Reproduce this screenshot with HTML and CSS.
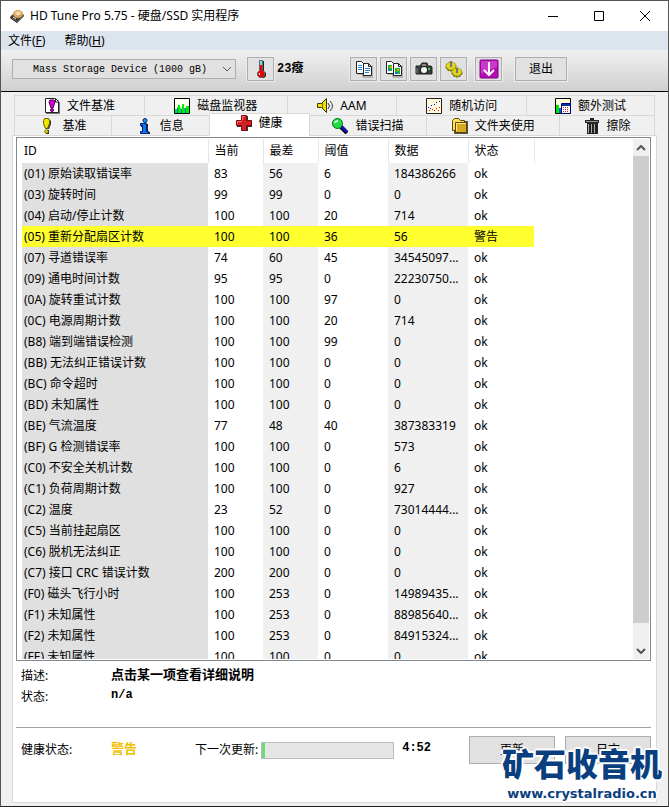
FILE: index.html
```html
<!DOCTYPE html>
<html lang="zh-CN">
<head>
    <meta charset="UTF-8">
    <meta name="viewport" content="width=device-width, initial-scale=1.0">
    <title>HD Tune Pro 5.75 - 硬盘/SSD 实用程序</title>
    <link rel="stylesheet" href="styles.css">
</head>
<body>
    <div class="window">
        <header class="title-bar">
            <svg class="app-icon" width="16" height="16" viewBox="0 0 16 16">
                <path d="M1 9 8 2l7 5-7 7z" fill="#443f3b"/>
                <path d="M1 9v1l7 5 7-7V7l-7 7z" fill="#17120f"/>
                <ellipse cx="9" cy="6" rx="5" ry="4" fill="#d9a55c"/>
                <ellipse cx="9" cy="5" rx="3" ry="2" fill="#f3cf95"/>
                <circle cx="9" cy="6" r="1" fill="#fff"/>
                <path d="m4 9 3 2" stroke="#eee"/>
            </svg>
            <h1 class="title">HD Tune Pro 5.75 - 硬盘/SSD 实用程序</h1>
            <div class="window-controls">
                <button aria-label="最小化"><svg width="12" height="12"><path d="M1 6.500h10" stroke="#000"/></svg></button>
                <button aria-label="最大化"><svg width="12" height="12"><path d="M1.500 1.500h9v9h-9z" fill="none" stroke="#000"/></svg></button>
                <button aria-label="关闭"><svg width="12" height="12"><path d="m1 1 10 10M11 1 1 11" stroke="#000"/></svg></button>
            </div>
        </header>

        <nav class="menu-bar">
            <a href="#file">文件(<u>F</u>)</a>
            <a href="#help">帮助(<u>H</u>)</a>
        </nav>

        <div class="toolbar">
            <div class="drive">
                <select class="drive-select" aria-label="驱动器">
                    <option>Mass Storage Device (1000 gB)</option>
                </select>
                <svg class="drive-arrow" width="10" height="6"><path d="m1 1 4 4 4-4" fill="none" stroke="#555"/></svg>
            </div>
            <button class="tool" aria-label="温度">
                <svg width="18" height="20" viewBox="0 0 18 20">
                    <path d="M9 2h3v10l2 2v3l-2 2H8l-2-2v-3l2-2z" fill="#222"/>
                    <path d="M7.500 1.500h3v10l2 2v3l-2 2h-3l-2-2v-3l2-2z" fill="#e00" stroke="#666"/>
                    <path d="M8 2h2v4H8z" fill="#5de6ee"/>
                    <path d="M7.500 14v2" stroke="#fff"/>
                </svg>
            </button>
            <span class="temperature">23癈</span>
            <div class="tool-group">
                <button class="tool" aria-label="复制文本">
                    <svg width="18" height="18" viewBox="0 0 18 18">
                        <path d="M3 14h5v3h10V5" fill="none" stroke="#888"/>
                        <path d="M1.500 1.500h5l2 2v10h-7zM8.500 3.500h5l3 3v9h-8z" fill="#fff" stroke="#222"/>
                        <path d="M13.500 3.500v3h3" fill="none" stroke="#222"/>
                        <path d="M3 5.500h4M3 7.500h4M3 9.500h4M10 8.500h5M10 10.500h5M10 12.500h4" stroke="#2684d8"/>
                    </svg>
                </button>
                <button class="tool" aria-label="复制图像">
                    <svg width="18" height="18" viewBox="0 0 18 18">
                        <path d="M3 14h5v3h10V5" fill="none" stroke="#888"/>
                        <path d="M1.500 1.500h5l2 2v10h-7zM8.500 3.500h5l3 3v9h-8z" fill="#fff" stroke="#222"/>
                        <path d="M13.500 3.500v3h3" fill="none" stroke="#222"/>
                        <path d="M3 5h4v6H3zM10 8h5v6h-5z" fill="#20b52e"/>
                        <path d="M3 9h2v2H3zM10 12h3v2h-3z" fill="#147ad5"/>
                        <path d="M5 6h2v2H5zM12 9h2v2h-2z" fill="#eea514"/>
                    </svg>
                </button>
                <button class="tool" aria-label="屏幕截图">
                    <svg width="18" height="18" viewBox="0 0 18 18">
                        <path d="M1 6h4l2-3h5l1 3h3l1 1v7H1z" fill="#383c3d" stroke="#222"/>
                        <path d="M7 6V4h4v2" fill="#888"/>
                        <circle cx="9" cy="10" r="4" fill="#222"/>
                        <circle cx="9" cy="10" r="3" fill="#f5f5f5"/>
                        <path d="M13 8h2v2h-2z" fill="#23dd42"/>
                        <path d="M2 8v5" stroke="#888"/>
                    </svg>
                </button>
                <button class="tool" aria-label="选项">
                    <svg width="18" height="18" viewBox="0 0 18 18">
                        <ellipse cx="6" cy="7" rx="5" ry="4" fill="#8a8200" stroke="#5f5900" stroke-dasharray="2 1"/>
                        <ellipse cx="12" cy="13" rx="5" ry="4" fill="#8a8200" stroke="#5f5900" stroke-dasharray="2 1"/>
                        <ellipse cx="6" cy="6" rx="5" ry="4" fill="#ddd320" stroke="#9b9200" stroke-dasharray="2 1"/>
                        <ellipse cx="12" cy="12" rx="5" ry="4" fill="#ddd320" stroke="#9b9200" stroke-dasharray="2 1"/>
                        <path d="M6 1v6M12 8v5" stroke="#777" stroke-width="2"/>
                    </svg>
                </button>
            </div>
            <button class="tool tool-save" aria-label="保存">
                <svg width="20" height="20" viewBox="0 0 20 20">
                    <rect x="1" y="1" width="18" height="18" rx="1" fill="#b30db3" stroke="#800080"/>
                    <path d="M2 2h16v6L2 15z" fill="#cb36cb"/>
                    <path d="M10 3v12M5 11l5 5 5-5" fill="none" stroke="#fff" stroke-width="2"/>
                </svg>
            </button>
            <button class="exit">退出</button>
        </div>

        <main class="content">
            <div class="tabs tabs-back" role="tablist">
                <button class="tab" role="tab">
                    <svg width="16" height="16" viewBox="0 0 16 16">
                        <path d="M2 2h12l2 3v11H2z" fill="#777"/>
                        <path d="M1.500.500h10l3 3v11h-13z" fill="#fff" stroke="#222"/>
                        <path d="M11.500 1v3h3" fill="none" stroke="#222"/>
                        <path d="M6 2h4l1 2-1 3-1 3H7L6 7 5 4z" fill="#d800d8" stroke="#500050"/>
                        <circle cx="8" cy="12" r="1.500" fill="#d800d8" stroke="#500050"/>
                    </svg>文件基准
                </button>
                <button class="tab" role="tab">
                    <svg width="16" height="16" viewBox="0 0 16 16">
                        <path d="M.500.500h15v15H.500z" fill="#fffff0" stroke="#000"/>
                        <path d="M1 11h2V9h1V7h2v3h1v1h1V6h2v4h2V8h3v7H1z" fill="#00ee00"/>
                        <path d="M3.500 10v5M7.500 11v4M11.500 10v5" stroke="#0060ff"/>
                    </svg>磁盘监视器
                </button>
                <button class="tab" role="tab">
                    <svg width="16" height="16" viewBox="0 0 16 16">
                        <path d="M.500 5.500h4l5-5v14l-5-5h-4z" fill="#efe000" stroke="#3c3800"/>
                        <path d="M5.500 5v5" stroke="#7a7000"/>
                        <path d="M11 5q3 3 0 6M13 3q5 5 0 10" fill="none" stroke="#333"/>
                    </svg>AAM
                </button>
                <button class="tab" role="tab">
                    <svg width="16" height="16" viewBox="0 0 16 16">
                        <path d="M.500.500h15v15H.500z" fill="#fff9dc" stroke="#222"/>
                        <path d="M2 9h1v1H2zM5 7h1v1H5zM8 6h1v1H8zM10 4h1v1h-1zM13 3h1v1h-1zM4 10h1v1H4z" fill="#00f"/>
                        <path d="M3 12h1v1H3zM6 11h1v1H6zM8 12h1v1H8zM10 10h1v1h-1zM13 9h1v1h-1zM12 12h1v1h-1z" fill="#f00"/>
                    </svg>随机访问
                </button>
                <button class="tab" role="tab">
                    <svg width="16" height="16" viewBox="0 0 16 16">
                        <path d="M.500.500h15v15H.500z" fill="#ffffdc" stroke="#000"/>
                        <path d="M1 7h3v8H1z" fill="#00e600"/>
                        <path d="M4 10h2v5H4z" fill="#0060ff"/>
                        <path d="M6.500 5.500h9v10h-9z" fill="#fff" stroke="#000080"/>
                        <path d="M7 7h8" stroke="#0030a0" stroke-width="2"/>
                        <path d="M8 9.500h6M8 11.500h6M8 13.500h6" stroke="#d02020" stroke-dasharray="1 1"/>
                    </svg>额外测试
                </button>
            </div>
            <div class="tabs tabs-front" role="tablist">
                <button class="tab" role="tab">
                    <svg width="16" height="16" viewBox="0 0 16 16">
                        <path d="M6 1h4l2 2v3l-2 5H7L5 6V3zM7 12h3v4H7z" fill="#333"/>
                        <path d="M5.500.500h4l1 2v3l-2 5h-2l-2-5v-3z" fill="#f2e600" stroke="#666000"/>
                        <circle cx="7.500" cy="13.500" r="1.700" fill="#f2e600" stroke="#666000"/>
                    </svg>基准
                </button>
                <button class="tab" role="tab">
                    <svg width="16" height="16" viewBox="0 0 16 16">
                        <path d="M5 6h6v8h2v2H4v-3h2V9H4V6z" fill="#222"/>
                        <path d="M3.500 5.500h6v8h2v2h-8v-2h2v-6h-2z" fill="#0878ff" stroke="#001d6c"/>
                        <circle cx="8" cy="2.500" r="2" fill="#1599ff" stroke="#001d6c"/>
                    </svg>信息
                </button>
                <button class="tab tab-active" role="tab" aria-selected="true">
                    <svg width="16" height="16" viewBox="0 0 16 16">
                        <path d="M6 1h6v5h4v6h-4v4H6v-4H1V6h5z" fill="#333"/>
                        <path d="M5.500.500h5v5h5v5h-5v5h-5v-5h-5v-5h5z" fill="#d51f25" stroke="#790c11"/>
                        <path d="M6.500 5V1.500H9M1.500 9V6.500H6" fill="none" stroke="#ff7175"/>
                    </svg>健康
                </button>
                <button class="tab" role="tab">
                    <svg width="16" height="16" viewBox="0 0 16 16">
                        <path d="m9 9 6 6" stroke="#000" stroke-width="4"/>
                        <path d="m9 8 6 6" stroke="#1111b8" stroke-width="3"/>
                        <circle cx="5.500" cy="5.500" r="5" fill="#22dc43" stroke="#086b19"/>
                        <path d="M3 5q0-2 3-2" fill="none" stroke="#c4ffd0" stroke-width="2"/>
                    </svg>错误扫描
                </button>
                <button class="tab" role="tab">
                    <svg width="16" height="16" viewBox="0 0 16 16">
                        <path d="M2 3h14v13H2z" fill="#555"/>
                        <path d="M.500 12.500v-10l2-2h4l2 2h4v10z" fill="#ffe05a" stroke="#5b4300"/>
                        <path d="M3.500 4.500h11v10h-11z" fill="#d9aa20" stroke="#5b4300"/>
                        <path d="M4.500 13V5.500H14" fill="none" stroke="#ffe989"/>
                    </svg>文件夹使用
                </button>
                <button class="tab" role="tab">
                    <svg width="16" height="16" viewBox="0 0 16 16">
                        <path d="M6 0h4v2h5v3h-1v11H3V5H1V2h5z" fill="#222"/>
                        <path d="M2 3.500h12" stroke="#999"/>
                        <path d="M4.500 6v9M7.500 6v9M10.500 6v9" stroke="#aaa"/>
                    </svg>擦除
                </button>
            </div>

            <section class="panel">
                <div class="list">
                    <div class="list-view">
                        <table class="attributes">
                            <thead>
                                <tr>
                                    <th class="col-id">ID</th>
                                    <th class="col-value">当前</th>
                                    <th class="col-value">最差</th>
                                    <th class="col-threshold">阈值</th>
                                    <th class="col-data">数据</th>
                                    <th class="col-status">状态</th>
                                </tr>
                            </thead>
                            <tbody>
                                <tr><td>(01) 原始读取错误率</td><td>83</td><td>56</td><td>6</td><td>184386266</td><td>ok</td></tr>
                                <tr><td>(03) 旋转时间</td><td>99</td><td>99</td><td>0</td><td>0</td><td>ok</td></tr>
                                <tr><td>(04) 启动/停止计数</td><td>100</td><td>100</td><td>20</td><td>714</td><td>ok</td></tr>
                                <tr class="warning"><td>(05) 重新分配扇区计数</td><td>100</td><td>100</td><td>36</td><td>56</td><td>警告</td></tr>
                                <tr><td>(07) 寻道错误率</td><td>74</td><td>60</td><td>45</td><td>34545097...</td><td>ok</td></tr>
                                <tr><td>(09) 通电时间计数</td><td>95</td><td>95</td><td>0</td><td>22230750...</td><td>ok</td></tr>
                                <tr><td>(0A) 旋转重试计数</td><td>100</td><td>100</td><td>97</td><td>0</td><td>ok</td></tr>
                                <tr><td>(0C) 电源周期计数</td><td>100</td><td>100</td><td>20</td><td>714</td><td>ok</td></tr>
                                <tr><td>(B8) 端到端错误检测</td><td>100</td><td>100</td><td>99</td><td>0</td><td>ok</td></tr>
                                <tr><td>(BB) 无法纠正错误计数</td><td>100</td><td>100</td><td>0</td><td>0</td><td>ok</td></tr>
                                <tr><td>(BC) 命令超时</td><td>100</td><td>100</td><td>0</td><td>0</td><td>ok</td></tr>
                                <tr><td>(BD) 未知属性</td><td>100</td><td>100</td><td>0</td><td>0</td><td>ok</td></tr>
                                <tr><td>(BE) 气流温度</td><td>77</td><td>48</td><td>40</td><td>387383319</td><td>ok</td></tr>
                                <tr><td>(BF) G 检测错误率</td><td>100</td><td>100</td><td>0</td><td>573</td><td>ok</td></tr>
                                <tr><td>(C0) 不安全关机计数</td><td>100</td><td>100</td><td>0</td><td>6</td><td>ok</td></tr>
                                <tr><td>(C1) 负荷周期计数</td><td>100</td><td>100</td><td>0</td><td>927</td><td>ok</td></tr>
                                <tr><td>(C2) 温度</td><td>23</td><td>52</td><td>0</td><td>73014444...</td><td>ok</td></tr>
                                <tr><td>(C5) 当前挂起扇区</td><td>100</td><td>100</td><td>0</td><td>0</td><td>ok</td></tr>
                                <tr><td>(C6) 脱机无法纠正</td><td>100</td><td>100</td><td>0</td><td>0</td><td>ok</td></tr>
                                <tr><td>(C7) 接口 CRC 错误计数</td><td>200</td><td>200</td><td>0</td><td>0</td><td>ok</td></tr>
                                <tr><td>(F0) 磁头飞行小时</td><td>100</td><td>253</td><td>0</td><td>14989435...</td><td>ok</td></tr>
                                <tr><td>(F1) 未知属性</td><td>100</td><td>253</td><td>0</td><td>88985640...</td><td>ok</td></tr>
                                <tr><td>(F2) 未知属性</td><td>100</td><td>253</td><td>0</td><td>84915324...</td><td>ok</td></tr>
                                <tr><td>(FE) 未知属性</td><td>100</td><td>100</td><td>0</td><td>0</td><td>ok</td></tr>
                            </tbody>
                        </table>
                    </div>
                    <div class="scrollbar">
                        <button class="scroll-button" aria-label="向上滚动"><svg width="10" height="6"><path d="m1 5 4-4 4 4" fill="none" stroke="#555" stroke-width="2"/></svg></button>
                        <div class="scroll-track"><div class="scroll-thumb"></div></div>
                        <button class="scroll-button" aria-label="向下滚动"><svg width="10" height="6"><path d="m1 1 4 4 4-4" fill="none" stroke="#555" stroke-width="2"/></svg></button>
                    </div>
                </div>

                <dl class="details">
                    <dt>描述:</dt>
                    <dd>点击某一项查看详细说明</dd>
                    <dt>状态:</dt>
                    <dd class="mono">n/a</dd>
                </dl>

                <footer class="status">
                    <span class="status-label">健康状态:</span>
                    <strong class="health">警告</strong>
                    <label class="next-update" for="nextUpdate">下一次更新:</label>
                    <progress class="update-progress" id="nextUpdate" max="100" value="2"></progress>
                    <strong class="mono countdown">4:52</strong>
                    <div class="actions">
                        <button>更新</button>
                        <button>日志</button>
                    </div>
                </footer>
            </section>
        </main>

        <div class="watermark">
            <span class="watermark-name">矿石收音机</span>
            <span class="watermark-url">www.crystalradio.cn</span>
        </div>
    </div>
</body>
</html>
```
FILE: styles.css
```css
* {
    box-sizing: border-box;
}

body {
    margin: 0;
    background: #f0f0f0;
    color: #000;
    font: 12px/20px "Noto Sans", "Noto Sans CJK SC", sans-serif;
}

button, select {
    padding: 0;
    border: 0;
    background: none;
    color: inherit;
    font: inherit;
}

svg {
    display: block;
    flex: none;
}

.window {
    position: relative;
    display: flex;
    flex-direction: column;
    height: 100vh;
    border: 1px solid #555;
    border-bottom-color: #222;
}

/* Title and menu */
.title-bar {
    display: flex;
    align-items: center;
    height: 30px;
    padding-left: 8px;
    background: #fff;
}

.title {
    flex: 1;
    margin: 0 0 0 5px;
    font-size: 12px;
    font-weight: normal;
}

.window-controls {
    display: flex;
}

.window-controls button {
    display: flex;
    align-items: center;
    justify-content: center;
    width: 46px;
    height: 30px;
}

.menu-bar {
    display: flex;
    gap: 19px;
    height: 19px;
    padding-left: 7px;
    background: #dce4ee;
}

.menu-bar a {
    color: inherit;
    text-decoration: none;
}

/* Toolbar */
.toolbar {
    display: flex;
    align-items: center;
    height: 42px;
    padding: 0 8px 3px 11px;
    border-bottom: 1px solid #000;
    background: linear-gradient(#f0f0f0, #d0d0d0);
}

.drive {
    position: relative;
    flex: 0 1 224px;
    margin-right: 11px;
}

.drive-select {
    appearance: none;
    display: block;
    width: 100%;
    height: 20px;
    padding: 1px 0 0 20px;
    border: 1px solid #adadad;
    border-radius: 0;
    background: #e1e1e1;
    font: 10px/18px "Liberation Mono", monospace;
}

.drive-arrow {
    position: absolute;
    top: 7px;
    right: 4px;
    pointer-events: none;
}

.tool, .exit {
    display: flex;
    align-items: center;
    justify-content: center;
    width: 27px;
    height: 24px;
    border: 1px solid #adadad;
    background: #e1e1e1;
    box-shadow: 0 0 0 1px #eee;
}

.temperature {
    margin: 0 auto 0 3px;
    font: bold 12px/20px "Liberation Mono", "Noto Sans CJK SC", monospace;
}

.tool-group {
    display: flex;
    gap: 3px;
}

.tool-save {
    margin-left: 8px;
}

.exit {
    width: 52px;
    margin: 0 93px 0 13px;
}

/* Tabs */
.content {
    display: flex;
    flex: 1;
    flex-direction: column;
    min-height: 0;
    padding: 3px 11px 3px;
}

.tabs {
    display: grid;
    height: 20px;
    margin: 0 2px;
    border-top: 1px solid #d9d9d9;
    border-left: 1px solid #d9d9d9;
}

.tabs-back {
    grid-template-columns: 130fr 143fr 110fr 130fr 128fr;
}

.tabs-front {
    grid-template-columns: 97fr 98fr 100fr 118fr 133fr 95fr;
}

.tab {
    display: flex;
    align-items: center;
    justify-content: center;
    gap: 7px;
    height: 19px;
    border-right: 1px solid #d9d9d9;
}

.tab-active {
    z-index: 1;
    height: 23px;
    margin-top: -3px;
    padding-bottom: 4px;
    border-top: 1px solid #d9d9d9;
    background: #fff;
}

.panel {
    display: flex;
    flex: 1;
    flex-direction: column;
    min-height: 0;
    padding: 1px 5px 0 3px;
    border: 1px solid #d9d9d9;
    background: #fff;
}

/* Attribute list */
.list {
    display: flex;
    flex: 1;
    min-height: 0;
    padding: 1px;
    border: 1px solid #828790;
}

.list-view {
    flex: 1;
    min-width: 0;
    padding-left: 4px;
    overflow: hidden;
}

.attributes {
    border-collapse: collapse;
    table-layout: fixed;
    width: 512px;
}

.attributes th {
    height: 24px;
    padding: 0 0 0 6px;
    border-right: 1px solid #e5e5e5;
    font-weight: normal;
    text-align: left;
}

.attributes td {
    height: 21px;
    padding: 0 0 0 6px;
    line-height: 20px;
    white-space: nowrap;
}

.attributes th:first-child,
.attributes td:first-child {
    padding-left: 2px;
}

.attributes td:first-child {
    background: #e0e0e0;
}

.attributes td:nth-child(3),
.attributes td:nth-child(5) {
    background: #f0f0f0;
}

.attributes .warning td {
    background: #ffff30;
}

.col-id {
    width: 186px;
}

.col-value {
    width: 55px;
}

.col-threshold {
    width: 70px;
}

.col-data {
    width: 80px;
}

.col-status {
    width: 66px;
}

.scrollbar {
    display: flex;
    flex-direction: column;
    width: 16px;
    background: #f0f0f0;
}

.scroll-button {
    display: flex;
    align-items: center;
    justify-content: center;
    height: 17px;
}

.scroll-track {
    flex: 1;
}

.scroll-thumb {
    height: 96%;
    background: #cdcdcd;
}

/* Details below the list */
.details {
    display: grid;
    grid-template-columns: 90px 1fr;
    grid-auto-rows: 21px;
    height: 67px;
    margin: 0;
    padding: 5px 0 0 5px;
    border-bottom: 1px solid #a0a0a0;
}

.details dd {
    margin: 0;
    font-size: 13px;
    font-weight: bold;
    line-height: 16px;
}

.details .mono, .mono {
    font: bold 12px/16px "Liberation Mono", monospace;
}

.status {
    display: flex;
    align-items: center;
    height: 74px;
    padding: 0 0 30px 5px;
}

.status-label {
    width: 90px;
}

.health {
    width: 84px;
    padding-bottom: 4px;
    color: #f0c000;
    font-size: 13px;
}

.update-progress {
    appearance: none;
    width: 133px;
    height: 17px;
    margin: 0 8px 0 3px;
    border: 1px solid #bcbcbc;
    background: #e6e6e6;
}

.update-progress::-webkit-progress-bar {
    background: #e6e6e6;
}

.update-progress::-webkit-progress-value {
    background: #6cdc78;
}

.countdown {
    padding-bottom: 4px;
}

.actions {
    display: flex;
    gap: 10px;
    margin-left: auto;
}

.actions button {
    width: 86px;
    height: 28px;
    border: 1px solid #adadad;
    background: #e1e1e1;
}

/* Site mark over the lower right corner */
.watermark {
    position: absolute;
    right: 6px;
    bottom: 2px;
    display: flex;
    flex-direction: column;
    align-items: center;
    color: #0a3f7f;
    font-weight: bold;
    text-shadow: -2px 0 #fff, 2px 0 #fff, 0 -2px #fff, 0 2px #fff, -1px -1px #fff, 1px 1px #fff, 1px -1px #fff, -1px 1px #fff;
    pointer-events: none;
}

.watermark-name {
    font-size: 32px;
    font-weight: 900;
    line-height: 40px;
}

.watermark-url {
    font: bold 13px/20px "DejaVu Sans", sans-serif;
}
```
